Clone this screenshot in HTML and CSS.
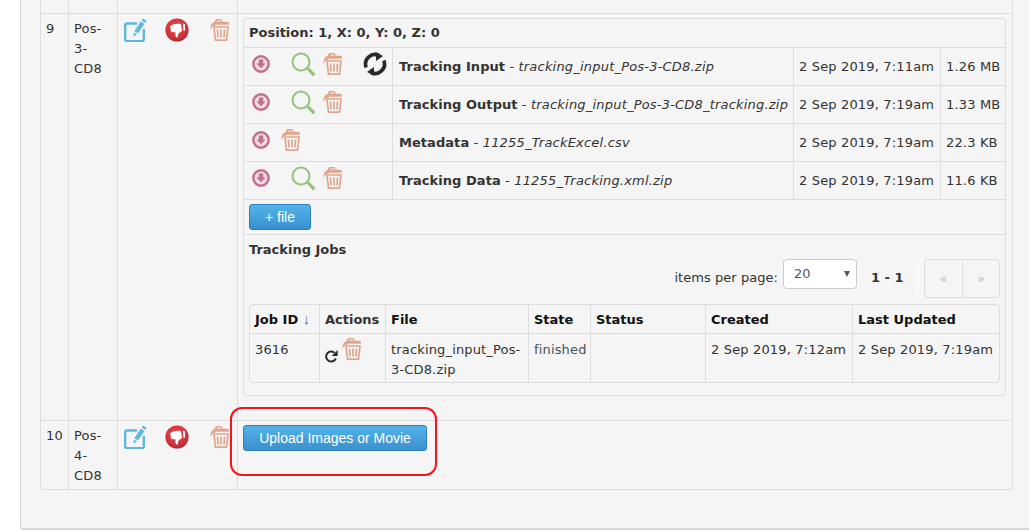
FILE: index.html
```html
<!DOCTYPE html>
<html lang="en">
<head>
<meta charset="utf-8">
<title>Positions</title>
<link rel="stylesheet" href="styles.css">
</head>
<body>
<svg class="defs" width="0" height="0" aria-hidden="true">
  <defs>
    <radialGradient id="red" cx="45%" cy="35%" r="70%">
      <stop offset="0" stop-color="#ea4450"/>
      <stop offset="0.7" stop-color="#d1313a"/>
      <stop offset="1" stop-color="#8f2a2e"/>
    </radialGradient>
    <symbol id="i-edit" viewBox="0 0 23 24">
      <path d="M13 5.500H3a1.800 1.800 0 0 0-1.800 1.800v14a1.800 1.800 0 0 0 1.800 1.800h15a1.800 1.800 0 0 0 1.800-1.800V11" fill="none" stroke="#5fb8dc" stroke-width="2.400"/>
      <path d="M19 0.500l3.600 2.400-1.300 2-3.600-2.400zM16.900 3.600l3.600 2.400-6.600 9.600-3.600-2.400zM10 14.600l3 2-3.600 1.800z" fill="#5fb8dc"/>
    </symbol>
    <symbol id="i-down" viewBox="0 0 24 24">
      <circle cx="12" cy="12" r="11.600" fill="url(#red)"/>
      <path d="M5.500 8C8 6 12 5.500 16 6l1 7-3.500 2.500-1 4c-2 .5-2.500-2.500-1.800-5L7 14c-1.500-.5-1.700-2-1-3-1-1-1-2-.5-3z" fill="#fff"/>
      <path d="M17.800 5.500l2.200.7v6.300l-1.500.5z" fill="#fff"/>
    </symbol>
    <symbol id="i-trash" viewBox="0 0 19 23">
      <path d="M4 9h14l-1.500 13.200h-11zM7.500 11.500l.5 8M11 11.500v8M14.500 11.500l-.5 8" fill="none" stroke="#e0a68d" stroke-width="1.700"/>
      <path d="M5.500 7.500C3 8 1.500 9.500.5 12 .2 8 1.500 5 5 3.800L5 2.200 6.500 1h5l1 2.400L18.800 4v2.800H6z" fill="#e0a68d"/>
      <path d="M7.300 2.400h3.600l.4 1H7z" fill="#f5f5f5"/>
    </symbol>
    <symbol id="i-save" viewBox="0 0 18 18">
      <circle cx="9" cy="9" r="7.700" fill="#f2dbe0" stroke="#c0708a" stroke-width="2.400"/>
      <path d="M6.800 4.500h4.400v4h2.300L9 13.200 4.500 8.500h2.300z" fill="#c0708a"/>
    </symbol>
    <symbol id="i-search" viewBox="0 0 25 25">
      <circle cx="10" cy="10" r="8.500" fill="none" stroke="#92c47a" stroke-width="2"/>
      <path d="M15.800 17.600l2-2 6.700 6.300-2.500 2.700z" fill="#92c47a"/>
    </symbol>
    <symbol id="i-sync" viewBox="0 0 24 24">
      <path d="M3.200 15.500A9.500 9.500 0 0 1 16 3.400" fill="none" stroke="#2b2b2b" stroke-width="3.600"/>
      <path d="M12.500 0l7.500 4-6.800 5z" fill="#2b2b2b"/>
      <path d="M20.800 8.500A9.500 9.500 0 0 1 8 20.600" fill="none" stroke="#2b2b2b" stroke-width="3.600"/>
      <path d="M11.500 24l-7.500-4 6.800-5z" fill="#2b2b2b"/>
    </symbol>
    <symbol id="i-redo" viewBox="0 0 13 13">
      <path d="M10.800 8.500A5 5 0 1 1 9.500 2.800" fill="none" stroke="#2b2b2b" stroke-width="2"/>
      <path d="M12.700 0v6h-6z" fill="#2b2b2b"/>
    </symbol>
  </defs>
</svg>

<main class="page">
  <table class="positions">
    <colgroup>
      <col class="c-num"><col class="c-name"><col class="c-actions"><col class="c-detail">
    </colgroup>
    <tbody>
      <tr class="stub"><td></td><td></td><td></td><td></td></tr>
      <tr>
        <td class="num">9</td>
        <td class="name">Pos-<br>3-<br>CD8</td>
        <td class="acts">
          <div class="act-row">
            <svg class="i-edit"><use href="#i-edit"/></svg>
            <svg class="i-down"><use href="#i-down"/></svg>
            <svg class="i-trash"><use href="#i-trash"/></svg>
          </div>
        </td>
        <td class="detail">
          <section class="panel">
            <h3 class="panel-head">Position: 1, X: 0, Y: 0, Z: 0</h3>
            <table class="files">
              <colgroup><col class="f-acts"><col class="f-name"><col class="f-date"><col class="f-size"></colgroup>
              <tbody>
                <tr>
                  <td><div class="file-acts">
                    <svg class="i-save"><use href="#i-save"/></svg>
                    <svg class="i-search"><use href="#i-search"/></svg>
                    <svg class="i-trash t-after"><use href="#i-trash"/></svg>
                    <svg class="i-sync"><use href="#i-sync"/></svg>
                  </div></td>
                  <td><b>Tracking Input</b> - <i>tracking_input_Pos-3-CD8.zip</i></td>
                  <td>2 Sep 2019, 7:11am</td>
                  <td>1.26 MB</td>
                </tr>
                <tr>
                  <td><div class="file-acts">
                    <svg class="i-save"><use href="#i-save"/></svg>
                    <svg class="i-search"><use href="#i-search"/></svg>
                    <svg class="i-trash t-after"><use href="#i-trash"/></svg>
                  </div></td>
                  <td><b>Tracking Output</b> - <i>tracking_input_Pos-3-CD8_tracking.zip</i></td>
                  <td>2 Sep 2019, 7:19am</td>
                  <td>1.33 MB</td>
                </tr>
                <tr>
                  <td><div class="file-acts">
                    <svg class="i-save"><use href="#i-save"/></svg>
                    <svg class="i-trash t-solo"><use href="#i-trash"/></svg>
                  </div></td>
                  <td><b>Metadata</b> - <i>11255_TrackExcel.csv</i></td>
                  <td>2 Sep 2019, 7:19am</td>
                  <td>22.3 KB</td>
                </tr>
                <tr>
                  <td><div class="file-acts">
                    <svg class="i-save"><use href="#i-save"/></svg>
                    <svg class="i-search"><use href="#i-search"/></svg>
                    <svg class="i-trash t-after"><use href="#i-trash"/></svg>
                  </div></td>
                  <td><b>Tracking Data</b> - <i>11255_Tracking.xml.zip</i></td>
                  <td>2 Sep 2019, 7:19am</td>
                  <td>11.6 KB</td>
                </tr>
              </tbody>
            </table>
            <div class="add-file"><button class="btn btn-file" type="button">+ file</button></div>
            <div class="jobs">
              <h4 class="jobs-title">Tracking Jobs</h4>
              <div class="pager-row">
                <span class="per-page">items per page:</span>
                <span class="select-wrap">
                  <select class="select"><option>20</option></select>
                </span>
                <b class="range">1 - 1</b>
                <nav class="pager"><a class="page-link">«</a><a class="page-link">»</a></nav>
              </div>
              <table class="job-table">
                <colgroup><col class="j1"><col class="j2"><col class="j3"><col class="j4"><col class="j5"><col class="j6"><col class="j7"></colgroup>
                <thead>
                  <tr><th>Job ID <span class="sort">↓</span></th><th>Actions</th><th>File</th><th>State</th><th>Status</th><th>Created</th><th>Last Updated</th></tr>
                </thead>
                <tbody>
                  <tr>
                    <td>3616</td>
                    <td><div class="job-acts">
                      <svg class="i-redo"><use href="#i-redo"/></svg>
                      <svg class="i-trash"><use href="#i-trash"/></svg>
                    </div></td>
                    <td>tracking_input_Pos-3-CD8.zip</td>
                    <td class="state">finished</td>
                    <td></td>
                    <td>2 Sep 2019, 7:12am</td>
                    <td>2 Sep 2019, 7:19am</td>
                  </tr>
                </tbody>
              </table>
            </div>
          </section>
        </td>
      </tr>
      <tr>
        <td class="num">10</td>
        <td class="name">Pos-<br>4-<br>CD8</td>
        <td class="acts">
          <div class="act-row">
            <svg class="i-edit"><use href="#i-edit"/></svg>
            <svg class="i-down"><use href="#i-down"/></svg>
            <svg class="i-trash"><use href="#i-trash"/></svg>
          </div>
        </td>
        <td class="detail upload-cell">
          <button class="btn btn-upload" type="button">Upload Images or Movie</button>
          <span class="callout"></span>
        </td>
      </tr>
    </tbody>
  </table>
</main>
</body>
</html>
```

FILE: styles.css
```css
* { box-sizing: border-box; }

html, body {
  margin: 0;
  height: 532px;
  overflow: hidden;
  background: #fff;
}

body {
  font-family: "DejaVu Sans", Verdana, sans-serif;
  font-size: 13px;
  line-height: 20px;
  letter-spacing: 0.16px;
  color: #333;
}

b, h3, h4, th { letter-spacing: 0; }

.defs { display: block; height: 0; }

svg { display: block; flex: none; }

.page {
  position: relative;
  margin-left: 20px;
  height: 530px;
  padding-left: 19px;
  background: #f5f5f5;
  border-left: 1px solid #cfd4d6;
  border-bottom: 2px solid #d6d9da;
  border-bottom-left-radius: 4px;
}

table {
  border-collapse: separate;
  border-spacing: 0;
  table-layout: fixed;
}

/* outer table */
.positions {
  width: 973px;
  border-left: 1px solid #ddd;
  border-right: 1px solid #ddd;
  border-bottom: 1px solid #ddd;
  border-bottom-left-radius: 4px;
  border-bottom-right-radius: 4px;
}
.c-num { width: 27px; }
.c-name { width: 49px; }
.c-actions { width: 120px; }
.c-detail { width: 775px; }

.positions > tbody > tr > td {
  vertical-align: top;
  border-top: 1px solid #ddd;
  border-left: 1px solid #ddd;
  padding: 5px 5px 3px;
}
.positions > tbody > tr > td:first-child { border-left: 0; }
.positions > tbody > tr.stub > td { height: 13px; padding: 0; border-top: 0; }

.positions > tbody > tr > td.num { padding-left: 5px; padding-right: 0; }
.positions > tbody > tr > td.name { padding-left: 5px; padding-right: 0; }

.positions > tbody > tr > td.acts { padding: 4px 0 0 6px; }
.act-row { display: flex; align-items: flex-start; }
.i-edit { width: 23px; height: 24px; }
.i-down { width: 24px; height: 24px; margin-left: 18px; }
.i-trash { width: 19px; height: 23px; }
.act-row .i-trash { margin-left: 21px; }

.positions > tbody > tr > td.detail { padding: 4px 6px 24px 5px; }
.positions > tbody > tr > td.upload-cell { padding-bottom: 0; position: relative; }

/* position panel */
.panel {
  width: 763px;
  border: 1px solid #ddd;
  border-radius: 4px;
}
.panel-head {
  margin: 0;
  height: 28px;
  padding: 4px 5px;
  font-size: 13px;
  line-height: 20px;
  font-weight: 700;
}

.files { width: 761px; }
.f-acts { width: 148px; }
.f-name { width: 401px; }
.f-date { width: 147px; }
.f-size { width: 65px; }

.files td {
  height: 38px;
  padding: 0 0 0 6px;
  border-top: 1px solid #ddd;
  border-left: 1px solid #ddd;
  white-space: nowrap;
  vertical-align: middle;
}
.files td:nth-child(3), .files td:nth-child(4) { padding-left: 5px; }
.files td:first-child { border-left: 0; padding: 0 0 0 8px; vertical-align: top; }
.files b { letter-spacing: 0.05px; }
.files i { letter-spacing: 0.2px; }

.file-acts { display: flex; align-items: flex-start; padding-top: 4px; }
.i-save { width: 18px; height: 18px; margin-top: 3px; }
.i-search { width: 25px; height: 25px; margin-left: 21px; }
.t-after { margin-left: 7px; }
.t-solo { margin-left: 11px; margin-top: 0; }
.i-sync { width: 24px; height: 24px; margin-left: 21px; }

.add-file {
  height: 36px;
  padding: 4px 5px 0;
  border-top: 1px solid #ddd;
  border-bottom: 1px solid #ddd;
}

.btn {
  display: block;
  padding: 0;
  font-family: "Liberation Sans", Arial, sans-serif;
  font-size: 14px;
  letter-spacing: 0;
  color: #fff;
  background: linear-gradient(#53b3e8, #3a90cf);
  border: 1px solid #2f7fc0;
  border-radius: 3px;
}
.btn-file { width: 62px; height: 26px; }
.btn-upload { width: 184px; height: 26px; }

/* jobs */
.jobs { padding: 5px 5px 12px; }
.jobs-title {
  margin: 0;
  height: 19px;
  font-size: 13px;
  line-height: 20px;
  font-weight: 700;
}
.pager-row {
  display: flex;
  justify-content: flex-end;
  align-items: flex-start;
  height: 39px;
}
.per-page { margin-top: 9px; margin-right: 5px; letter-spacing: 0.05px; }
.select-wrap { position: relative; display: block; width: 74px; height: 30px; }
.select-wrap::after {
  content: "";
  position: absolute;
  right: 7px;
  top: 12px;
  border-left: 3.5px solid transparent;
  border-right: 3.5px solid transparent;
  border-top: 6px solid #555;
}
.select {
  display: block;
  width: 100%;
  height: 100%;
  padding: 0 0 2px 10px;
  font-family: inherit;
  font-size: 13px;
  color: #555;
  background: #fff;
  border: 1px solid #ccc;
  border-radius: 4px;
  appearance: none;
}
.range { margin: 9px 10px 0 14px; width: 33px; white-space: nowrap; }
.pager {
  display: flex;
  height: 39px;
  padding-left: 10px;
  background: #f7f7f7;
  border-radius: 4px;
}
.page-link {
  width: 38px;
  height: 39px;
  border: 1px solid #ddd;
  color: #bbb;
  font-size: 12px;
  line-height: 39px;
  text-align: center;
  background: #f5f5f5;
}
.page-link:first-child { border-radius: 4px 0 0 4px; border-right: 0; }
.page-link:last-child { border-radius: 0 4px 4px 0; }

.job-table {
  width: 751px;
  margin-top: 6px;
  border: 1px solid #ddd;
  border-radius: 4px;
}
.j1 { width: 69px; }
.j2 { width: 66px; }
.j3 { width: 143px; }
.j4 { width: 62px; }
.j5 { width: 115px; }
.j6 { width: 147px; }
.j7 { width: 147px; }

.job-table th, .job-table td {
  padding: 5px 5px 3px;
  border-left: 1px solid #ddd;
  text-align: left;
  vertical-align: top;
}
.job-table th:first-child, .job-table td:first-child { border-left: 0; }
.job-table th {
  height: 28px;
  color: #111;
  font-weight: 700;
  white-space: nowrap;
}
.job-table th:nth-child(2) { color: #333; }
.job-table td {
  height: 49px;
  padding-top: 6px;
  padding-bottom: 0;
  border-top: 1px solid #ddd;
}
.sort { font-family: "Liberation Sans", sans-serif; font-size: 15px; line-height: 0; color: #3a7fc0; font-weight: 400; }
.state { color: #44525c; }
.job-acts { display: flex; align-items: flex-start; margin-top: -3px; }
.i-redo { width: 13px; height: 13px; margin-top: 13px; }
.job-acts .i-trash { margin-left: 4px; }

.callout {
  position: absolute;
  left: -8px;
  top: -14px;
  width: 207px;
  height: 69px;
  border: 2px solid #f5141c;
  border-radius: 12px;
}
```
